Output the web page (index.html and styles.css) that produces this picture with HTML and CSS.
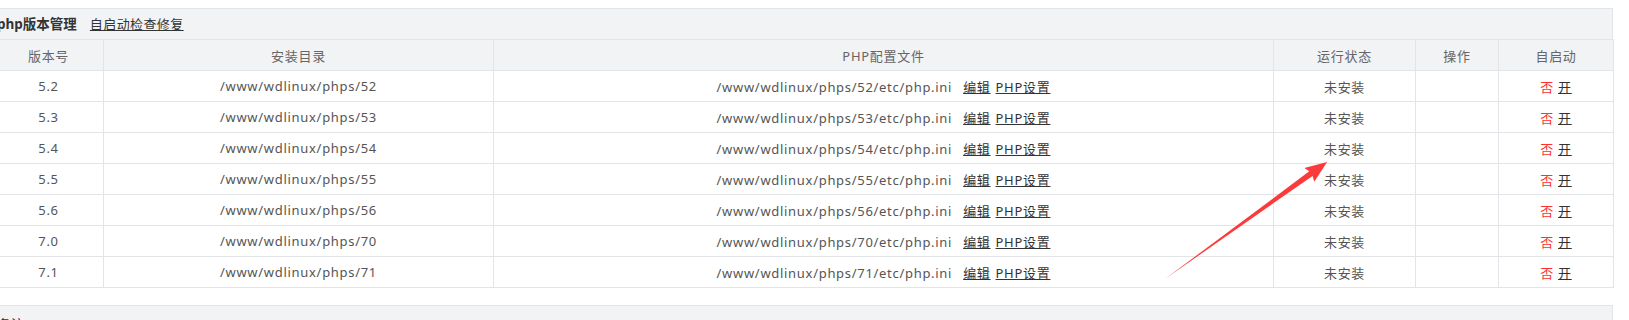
FILE: index.html
```html
<!DOCTYPE html>
<html lang="zh-CN">
<head>
<meta charset="utf-8">
<title>php版本管理</title>
<link rel="stylesheet" href="styles.css">
</head>
<body>
<div class="page">
  <div class="panel-title">
    <span class="title-text">php版本管理</span>
    <a class="title-link" href="#">自启动检查修复</a>
  </div>
  <table class="ver-table">
    <colgroup>
      <col class="c-ver"><col class="c-dir"><col class="c-conf"><col class="c-state"><col class="c-op"><col class="c-auto">
    </colgroup>
    <thead>
      <tr><th>版本号</th><th>安装目录</th><th>PHP配置文件</th><th>运行状态</th><th>操作</th><th>自启动</th></tr>
    </thead>
    <tbody>
      <tr><td>5.2</td><td>/www/wdlinux/phps/52</td><td>/www/wdlinux/phps/52/etc/php.ini<a class="lk lk-edit" href="#">编辑</a><a class="lk lk-set" href="#">PHP设置</a></td><td>未安装</td><td></td><td><span class="no">否</span> <a class="on" href="#">开</a></td></tr>
      <tr><td>5.3</td><td>/www/wdlinux/phps/53</td><td>/www/wdlinux/phps/53/etc/php.ini<a class="lk lk-edit" href="#">编辑</a><a class="lk lk-set" href="#">PHP设置</a></td><td>未安装</td><td></td><td><span class="no">否</span> <a class="on" href="#">开</a></td></tr>
      <tr><td>5.4</td><td>/www/wdlinux/phps/54</td><td>/www/wdlinux/phps/54/etc/php.ini<a class="lk lk-edit" href="#">编辑</a><a class="lk lk-set" href="#">PHP设置</a></td><td>未安装</td><td></td><td><span class="no">否</span> <a class="on" href="#">开</a></td></tr>
      <tr><td>5.5</td><td>/www/wdlinux/phps/55</td><td>/www/wdlinux/phps/55/etc/php.ini<a class="lk lk-edit" href="#">编辑</a><a class="lk lk-set" href="#">PHP设置</a></td><td>未安装</td><td></td><td><span class="no">否</span> <a class="on" href="#">开</a></td></tr>
      <tr><td>5.6</td><td>/www/wdlinux/phps/56</td><td>/www/wdlinux/phps/56/etc/php.ini<a class="lk lk-edit" href="#">编辑</a><a class="lk lk-set" href="#">PHP设置</a></td><td>未安装</td><td></td><td><span class="no">否</span> <a class="on" href="#">开</a></td></tr>
      <tr><td>7.0</td><td>/www/wdlinux/phps/70</td><td>/www/wdlinux/phps/70/etc/php.ini<a class="lk lk-edit" href="#">编辑</a><a class="lk lk-set" href="#">PHP设置</a></td><td>未安装</td><td></td><td><span class="no">否</span> <a class="on" href="#">开</a></td></tr>
      <tr><td>7.1</td><td>/www/wdlinux/phps/71</td><td>/www/wdlinux/phps/71/etc/php.ini<a class="lk lk-edit" href="#">编辑</a><a class="lk lk-set" href="#">PHP设置</a></td><td>未安装</td><td></td><td><span class="no">否</span> <a class="on" href="#">开</a></td></tr>
    </tbody>
  </table>
  <div class="note">备注：</div>
</div>
<svg class="arrow" width="1629" height="320" viewBox="0 0 1629 320" aria-hidden="true">
  <g transform="translate(1165 279) rotate(-35.84)">
    <polygon points="0,0 180,-2.8 178,-8.5 200,0 178,8.5 180,2.8" fill="#fb3b3b"/>
  </g>
</svg>
</body>
</html>
```

FILE: styles.css
```css
html, body {
  margin: 0;
  padding: 0;
  background: #ffffff;
  overflow: hidden;
}
body {
  font-family: "Noto Sans", "Noto Sans CJK SC", sans-serif;
  font-size: 13px;
  color: #555555;
  position: relative;
  width: 1629px;
  height: 320px;
}
.page {
  margin-top: 8px;
  margin-left: -7px;
  width: 1620px;
}
.panel-title {
  height: 30px;
  line-height: 30px;
  background: #f2f3f5;
  border: 1px solid #e2e4e8;
  border-bottom: none;
  padding-left: 3px;
  display: flex;
  align-items: center;
  gap: 13px;
}
.title-text {
  font-size: 13.5px;
  font-weight: bold;
  color: #333333;
  letter-spacing: 0;
}
.title-link {
  font-size: 13px;
  color: #333333;
  text-decoration: underline;
  letter-spacing: 0.4px;
}
.ver-table {
  border-collapse: collapse;
  table-layout: fixed;
  width: 1620px;
  letter-spacing: 0.7px;
}
.c-ver { width: 110px; }
.c-dir { width: 390px; }
.c-conf { width: 780px; }
.c-state { width: 142px; }
.c-op { width: 83px; }
.c-auto { width: 115px; }
.ver-table th,
.ver-table td {
  border: 1px solid #e2e4e8;
  height: 30px;
  padding: 0;
  text-align: center;
  white-space: nowrap;
  font-weight: normal;
}
.ver-table th {
  background: #f2f3f5;
  color: #666666;
}
.ver-table td {
  color: #555555;
}
.lk {
  color: #333333;
  text-decoration: underline;
}
.lk-edit { margin-left: 11px; }
.lk-set { margin-left: 5px; }
.no { color: #ff3030; }
.on {
  color: #333333;
  text-decoration: underline;
}
.note {
  margin-top: 17px;
  height: 40px;
  background: #f2f3f5;
  border: 1px solid #e2e4e8;
  border-bottom: none;
  padding: 8px 0 0 4px;
  font-size: 13px;
  color: #333333;
  box-sizing: border-box;
}
.arrow {
  position: absolute;
  left: 0;
  top: 0;
  pointer-events: none;
}
```
